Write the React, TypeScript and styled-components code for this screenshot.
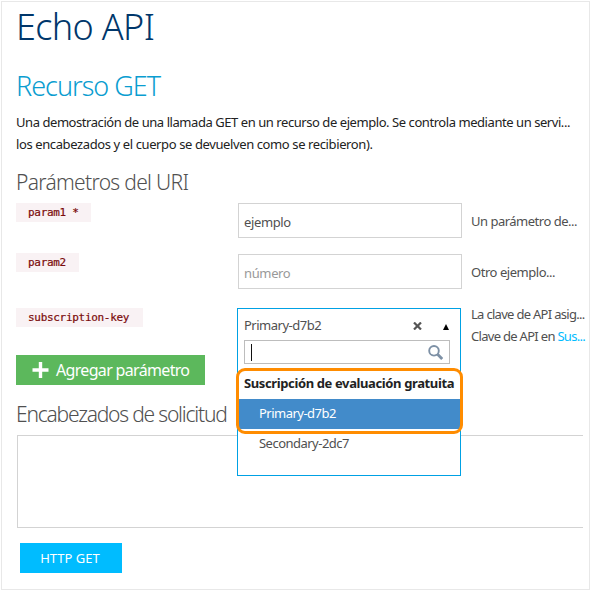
import React from "react";
import styled, { createGlobalStyle } from "styled-components";

const GlobalStyle = createGlobalStyle`
  *, *::before, *::after { box-sizing: border-box; }
  body { margin: 0; background: #fff; }
  h1, h2, h3, p { margin: 0; }
`;

const Frame = styled.main`
  width: 589px;
  height: 589px;
  margin: 1px;
  padding: 0 3px 0 14px;
  border: 1px solid #e8e8e8;
  background: #fff;
  font-family: "Noto Sans", "Open Sans", sans-serif;
  font-size: 13px;
  color: #505050;
  white-space: nowrap;
  overflow: hidden;
`;

const Heading = styled.h1<{ $size: number; $line: number; $color: string; $track: number; $gap?: number }>`
  font-weight: 300;
  font-size: ${(p) => p.$size}px;
  line-height: ${(p) => p.$line}px;
  letter-spacing: ${(p) => p.$track}px;
  color: ${(p) => p.$color};
  margin-top: ${(p) => p.$gap ?? 0}px;
`;

const Line = styled.span<{ $track?: number }>`
  display: block;
  line-height: 22px;
  letter-spacing: ${(p) => p.$track ?? 0}px;
`;

const Description = styled.p`
  margin-top: 5px;
  color: #222;
`;

const Params = styled.section`
  padding-top: 6px;
`;

const ParamRow = styled.div<{ $height: number }>`
  display: grid;
  grid-template-columns: 222px 224px 1fr;
  align-items: start;
  height: ${(p) => p.$height}px;
`;

const Tag = styled.code<{ $width: number }>`
  display: block;
  width: ${(p) => p.$width}px;
  height: 19px;
  padding-left: 12px;
  background: #f9f2f4;
  color: #7b0b0b;
  font: 11px/20px "DejaVu Sans Mono", monospace;
  letter-spacing: -0.3px;
  -webkit-text-stroke: 0.2px #7b0b0b;
  white-space: pre;
`;

const Field = styled.input<{ $top?: number }>`
  width: 224px;
  height: 35px;
  margin: ${(p) => p.$top ?? 0}px 0 0;
  padding: 2px 5px 0;
  border: 1px solid #d3d3d3;
  background: #fff;
  font: inherit;
  letter-spacing: -0.36px;
  color: #505050;
  outline: 0;
  &::placeholder { color: #999; opacity: 1; }
`;

const Note = styled.div<{ $top: number }>`
  margin-top: ${(p) => p.$top}px;
  padding-left: 9px;
`;

const Link = styled.a`
  color: #00bcff;
`;

const Select = styled.div`
  position: relative;
  z-index: 1;
  width: 224px;
  height: 168px;
  margin-left: -1px;
  border: 1px solid #00a1e4;
  background: #fff;
`;

const Selected = styled.div`
  display: flex;
  align-items: center;
  height: 31px;
  padding: 3px 11px 0 6px;
  svg { flex: none; }
`;

const SelectedLabel = styled.span`
  flex: 1;
  margin-top: -2px;
  letter-spacing: -0.5px;
`;

const ClearIcon = styled.svg`
  margin: 0 21px 0 0;
`;

const ArrowIcon = styled.svg`
  margin-top: 1px;
`;

const SearchBox = styled.div`
  display: flex;
  align-items: center;
  justify-content: space-between;
  width: 206px;
  height: 24px;
  margin-left: 6px;
  padding: 0 6px;
  border: 1px solid #bdbdbd;
`;

const Caret = styled.span`
  width: 1px;
  height: 17px;
  background: #111;
`;

const GroupLabel = styled.div`
  height: 35px;
  padding: 4px 0 0 6px;
  line-height: 31px;
  font-weight: 700;
  letter-spacing: -0.38px;
  color: #222;
`;

const Option = styled.div<{ $active?: boolean }>`
  height: 30px;
  margin-left: -1px;
  padding-left: 22px;
  line-height: 29px;
  letter-spacing: -0.52px;
  background: ${(p) => (p.$active ? "#428bca" : "transparent")};
  color: ${(p) => (p.$active ? "#fff" : "#505050")};
`;

const Highlight = styled.div`
  position: absolute;
  left: -2px;
  top: 59px;
  width: 227px;
  height: 66px;
  border: 3px solid #ff8c00;
  border-radius: 9px;
`;

const AddButton = styled.button`
  display: flex;
  align-items: center;
  width: 189px;
  height: 30px;
  padding: 0 0 0 16px;
  gap: 7px;
  border: 0;
  background: #5cb85c;
  color: #fff;
  font: 16px/30px "Noto Sans", "Open Sans", sans-serif;
  letter-spacing: -0.67px;
`;

const HeadersBox = styled.div`
  width: 566px;
  height: 93px;
  margin: 6px 0 0 1px;
  border: 1px solid #d3d3d3;
  border-right: 0;
`;

const SendButton = styled.button`
  display: block;
  width: 102px;
  height: 30px;
  margin: 15px 0 0 4px;
  padding: 0 2px 0 0;
  border: 0;
  background: #00bcff;
  color: #fff;
  font: 13px/29px "Noto Sans", "Open Sans", sans-serif;
  letter-spacing: 0;
`;

export default function App() {
  return (
    <>
      <GlobalStyle />
      <Frame>
        <Heading $size={36} $line={50} $color="#00376b" $track={-0.65}>Echo API</Heading>
        <Heading as="h2" $size={27} $line={40} $gap={14} $color="#0a9dd0" $track={-1}>Recurso GET</Heading>
        <Description>
          <Line $track={-0.44}>Una demostración de una llamada GET en un recurso de ejemplo. Se controla mediante un servi...</Line>
          <Line $track={-0.39}>los encabezados y el cuerpo se devuelven como se recibieron).</Line>
        </Description>
        <Heading as="h3" $size={21} $line={30} $gap={12} $color="#505050" $track={-0.68}>Parámetros del URI</Heading>
        <Params>
          <ParamRow $height={50}>
            <Tag $width={75}>param1 *</Tag>
            <Field defaultValue="ejemplo" />
            <Note $top={7}><Line $track={-0.5}>Un parámetro de...</Line></Note>
          </ParamRow>
          <ParamRow $height={55}>
            <Tag $width={63}>param2</Tag>
            <Field placeholder="número" $top={1} />
            <Note $top={8}><Line $track={-0.46}>Otro ejemplo...</Line></Note>
          </ParamRow>
          <ParamRow $height={47}>
            <Tag $width={127}>subscription-key</Tag>
            <Select>
              <Selected>
                <SelectedLabel>Primary-d7b2</SelectedLabel>
                <ClearIcon width="9" height="8" viewBox="0 0 9 8">
                  <path d="M1 .5 8 7.5M8 .5 1 7.5" stroke="#555" strokeWidth="2.2" />
                </ClearIcon>
                <ArrowIcon width="6" height="6" viewBox="0 0 6 6">
                  <path d="M3 0 6 6H0Z" fill="#000" />
                </ArrowIcon>
              </Selected>
              <SearchBox>
                <Caret />
                <svg width="15" height="15" viewBox="0 0 15 15" fill="none" stroke="#7d90a5">
                  <circle cx="6" cy="5.8" r="4.8" strokeWidth="1.9" />
                  <path d="m9.5 9.3 4.7 4.7" strokeWidth="2.8" />
                </svg>
              </SearchBox>
              <GroupLabel>Suscripción de evaluación gratuita</GroupLabel>
              <Option $active>Primary-d7b2</Option>
              <Option>Secondary-2dc7</Option>
              <Highlight />
            </Select>
            <Note $top={-5}>
              <Line $track={-0.7}>La clave de API asig...</Line>
              <Line $track={-0.7}>Clave de API en <Link>Sus...</Link></Line>
            </Note>
          </ParamRow>
        </Params>
        <AddButton>
          <svg width="17" height="16" viewBox="0 0 17 16">
            <path d="M8.5 0v16M0.5 8h16" stroke="#fff" strokeWidth="3.4" />
          </svg>
          Agregar parámetro
        </AddButton>
        <Heading as="h3" $size={21} $line={30} $gap={14} $color="#505050" $track={-1.2}>Encabezados de solicitud</Heading>
        <HeadersBox />
        <SendButton>HTTP GET</SendButton>
      </Frame>
    </>
  );
}
